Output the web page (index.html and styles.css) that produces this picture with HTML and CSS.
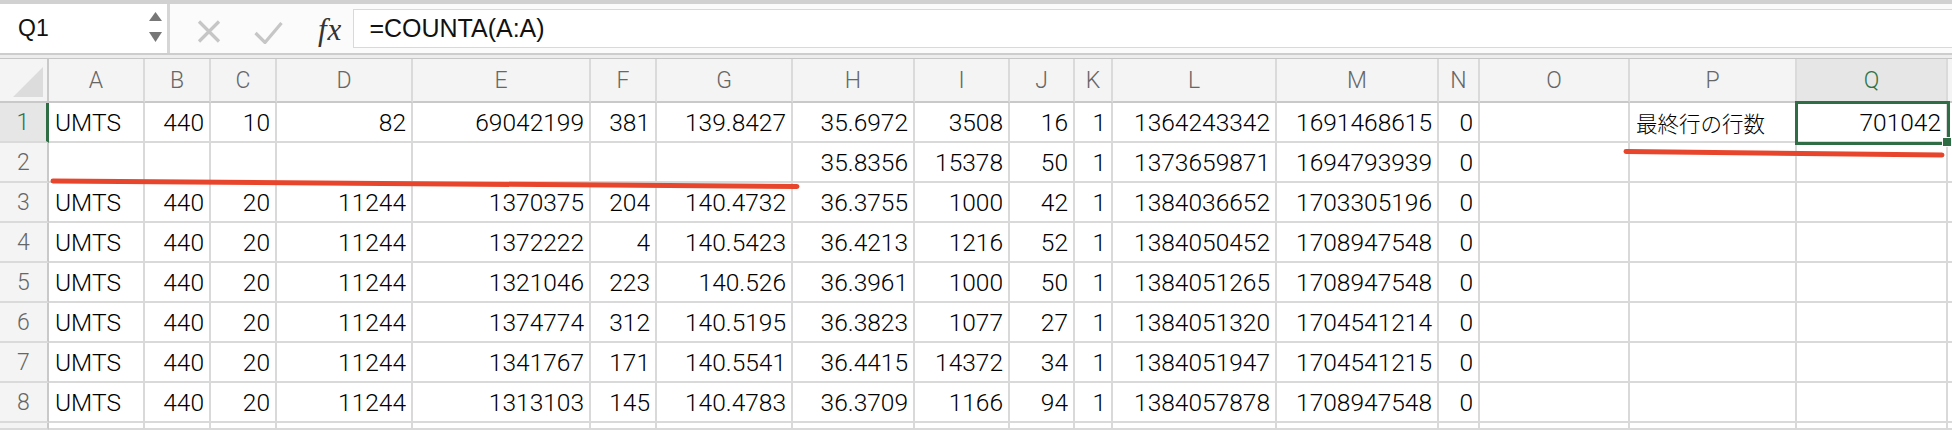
FILE: index.html
```html
<!DOCTYPE html>
<html lang="ja">
<head>
<meta charset="utf-8">
<title>Excel</title>
<link rel="stylesheet" href="styles.css">
</head>
<body>
<div class="app">
  <div class="topstrip"></div>
  <div class="toolbar">
    <div class="namebox">
      <span class="ref">Q1</span>
      <svg class="spin" width="14" height="32" viewBox="0 0 14 32">
        <polygon points="0,9 6.5,0 13,9" fill="#777"/>
        <polygon points="0,20 13,20 6.5,30" fill="#777"/>
      </svg>
    </div>
    <div class="actions">
      <svg class="icon-x" width="24" height="23" viewBox="0 0 24 23">
        <path d="M2 1.5 L22 21.5 M22 1.5 L2 21.5" stroke="#c6c6c6" stroke-width="3.2" fill="none"/>
      </svg>
      <svg class="icon-check" width="29" height="22" viewBox="0 0 29 22">
        <path d="M1.5 11 L11 20.5 L27.5 1" stroke="#c6c6c6" stroke-width="3.2" fill="none"/>
      </svg>
      <span class="fx">fx</span>
    </div>
    <div class="formula">=COUNTA(A:A)</div>
  </div>
  <div class="toolbar-sep"></div>

  <div class="sheet">
    <!-- header row -->
    <div class="corner"><div class="tri"></div></div>
    <div class="ch">A</div><div class="ch">B</div><div class="ch">C</div><div class="ch">D</div>
    <div class="ch">E</div><div class="ch">F</div><div class="ch">G</div><div class="ch">H</div>
    <div class="ch">I</div><div class="ch">J</div><div class="ch">K</div><div class="ch">L</div>
    <div class="ch">M</div><div class="ch">N</div><div class="ch">O</div><div class="ch">P</div>
    <div class="ch ch-sel">Q</div><div class="ch ch-end"></div>

    <!-- row 1 -->
    <div class="rh rh-sel">1</div>
    <div class="c">UMTS</div><div class="c n">440</div><div class="c n">10</div><div class="c n">82</div>
    <div class="c n">69042199</div><div class="c n">381</div><div class="c n">139.8427</div><div class="c n">35.6972</div>
    <div class="c n">3508</div><div class="c n">16</div><div class="c n">1</div><div class="c n">1364243342</div>
    <div class="c n">1691468615</div><div class="c n">0</div><div class="c"></div><div class="c jp">最終行の行数</div>
    <div class="c n sel">701042</div><div class="c end"></div>

    <!-- row 2 -->
    <div class="rh">2</div>
    <div class="c"></div><div class="c"></div><div class="c"></div><div class="c"></div>
    <div class="c"></div><div class="c"></div><div class="c"></div><div class="c n">35.8356</div>
    <div class="c n">15378</div><div class="c n">50</div><div class="c n">1</div><div class="c n">1373659871</div>
    <div class="c n">1694793939</div><div class="c n">0</div><div class="c"></div><div class="c"></div>
    <div class="c"></div><div class="c end"></div>

    <!-- row 3 -->
    <div class="rh">3</div>
    <div class="c">UMTS</div><div class="c n">440</div><div class="c n">20</div><div class="c n">11244</div>
    <div class="c n">1370375</div><div class="c n">204</div><div class="c n">140.4732</div><div class="c n">36.3755</div>
    <div class="c n">1000</div><div class="c n">42</div><div class="c n">1</div><div class="c n">1384036652</div>
    <div class="c n">1703305196</div><div class="c n">0</div><div class="c"></div><div class="c"></div>
    <div class="c"></div><div class="c end"></div>

    <!-- row 4 -->
    <div class="rh">4</div>
    <div class="c">UMTS</div><div class="c n">440</div><div class="c n">20</div><div class="c n">11244</div>
    <div class="c n">1372222</div><div class="c n">4</div><div class="c n">140.5423</div><div class="c n">36.4213</div>
    <div class="c n">1216</div><div class="c n">52</div><div class="c n">1</div><div class="c n">1384050452</div>
    <div class="c n">1708947548</div><div class="c n">0</div><div class="c"></div><div class="c"></div>
    <div class="c"></div><div class="c end"></div>

    <!-- row 5 -->
    <div class="rh">5</div>
    <div class="c">UMTS</div><div class="c n">440</div><div class="c n">20</div><div class="c n">11244</div>
    <div class="c n">1321046</div><div class="c n">223</div><div class="c n">140.526</div><div class="c n">36.3961</div>
    <div class="c n">1000</div><div class="c n">50</div><div class="c n">1</div><div class="c n">1384051265</div>
    <div class="c n">1708947548</div><div class="c n">0</div><div class="c"></div><div class="c"></div>
    <div class="c"></div><div class="c end"></div>

    <!-- row 6 -->
    <div class="rh">6</div>
    <div class="c">UMTS</div><div class="c n">440</div><div class="c n">20</div><div class="c n">11244</div>
    <div class="c n">1374774</div><div class="c n">312</div><div class="c n">140.5195</div><div class="c n">36.3823</div>
    <div class="c n">1077</div><div class="c n">27</div><div class="c n">1</div><div class="c n">1384051320</div>
    <div class="c n">1704541214</div><div class="c n">0</div><div class="c"></div><div class="c"></div>
    <div class="c"></div><div class="c end"></div>

    <!-- row 7 -->
    <div class="rh">7</div>
    <div class="c">UMTS</div><div class="c n">440</div><div class="c n">20</div><div class="c n">11244</div>
    <div class="c n">1341767</div><div class="c n">171</div><div class="c n">140.5541</div><div class="c n">36.4415</div>
    <div class="c n">14372</div><div class="c n">34</div><div class="c n">1</div><div class="c n">1384051947</div>
    <div class="c n">1704541215</div><div class="c n">0</div><div class="c"></div><div class="c"></div>
    <div class="c"></div><div class="c end"></div>

    <!-- row 8 -->
    <div class="rh">8</div>
    <div class="c">UMTS</div><div class="c n">440</div><div class="c n">20</div><div class="c n">11244</div>
    <div class="c n">1313103</div><div class="c n">145</div><div class="c n">140.4783</div><div class="c n">36.3709</div>
    <div class="c n">1166</div><div class="c n">94</div><div class="c n">1</div><div class="c n">1384057878</div>
    <div class="c n">1708947548</div><div class="c n">0</div><div class="c"></div><div class="c"></div>
    <div class="c"></div><div class="c end"></div>

    <!-- row 9 (partial) -->
    <div class="rh"></div>
    <div class="c"></div><div class="c"></div><div class="c"></div><div class="c"></div>
    <div class="c"></div><div class="c"></div><div class="c"></div><div class="c"></div>
    <div class="c"></div><div class="c"></div><div class="c"></div><div class="c"></div>
    <div class="c"></div><div class="c"></div><div class="c"></div><div class="c"></div>
    <div class="c"></div><div class="c end"></div>
  </div>

  <svg class="marks" width="1952" height="430" viewBox="0 0 1952 430">
    <path d="M53 181 L797 186.5" stroke="#e8462c" stroke-width="5" stroke-linecap="round" fill="none"/>
    <path d="M1626 151.5 L1942 155" stroke="#e8462c" stroke-width="5" stroke-linecap="round" fill="none"/>
  </svg>
</div>
</body>
</html>
```

FILE: styles.css
```css
html, body {
  margin: 0;
  padding: 0;
}

body {
  width: 1952px;
  height: 430px;
  overflow: hidden;
  background: #ffffff;
  font-family: "Noto Sans CJK JP", "Noto Sans", sans-serif;
}

.app {
  position: relative;
  width: 1952px;
  height: 430px;
  display: flex;
  flex-direction: column;
}

.topstrip {
  flex: none;
  height: 4px;
  background: #d1d1d1;
}

/* ---------- toolbar ---------- */
.toolbar {
  flex: none;
  height: 49px;
  display: flex;
  background: #fbfbfb;
}

.namebox {
  box-sizing: border-box;
  width: 170px;
  height: 49px;
  background: #ffffff;
  border-right: 3px solid #d6d6d6;
  display: flex;
  align-items: center;
  justify-content: space-between;
  padding: 0 4px 0 18px;
}

.ref {
  font-family: "Liberation Sans", Arial, sans-serif;
  font-size: 23px;
  color: #111;
  margin-top: -1px;
}

.spin {
  display: block;
  margin-top: -1px;
}

.actions {
  display: flex;
  align-items: center;
  padding-left: 27px;
}

.icon-x {
  display: block;
  margin-top: 6px;
}

.icon-check {
  display: block;
  margin-left: 33px;
  margin-top: 8px;
}

.fx {
  margin-left: 35px;
  font-family: "Liberation Serif", "DejaVu Serif", serif;
  font-style: italic;
  font-size: 31px;
  letter-spacing: 1px;
  color: #333;
  margin-top: 2px;
}

.formula {
  flex: 1;
  box-sizing: border-box;
  height: 39px;
  margin-top: 5px;
  margin-left: 11px;
  background: #ffffff;
  border: 1px solid #d9d9d9;
  border-right: none;
  display: flex;
  align-items: center;
  padding-left: 15px;
  font-family: "Liberation Sans", Arial, sans-serif;
  font-size: 25px;
  color: #111;
}

.toolbar-sep {
  flex: none;
  box-sizing: border-box;
  height: 6px;
  border-top: 2px solid #cdcdcd;
  border-bottom: 1px solid #c6c6c6;
  background: #ededed;
}

/* ---------- sheet ---------- */
.sheet {
  flex: 1;
  display: grid;
  grid-template-columns: 49px 96px 66px 66px 136px 178px 66px 136px 122px 95px 65px 38px 164px 162px 41px 150px 167px 151px 1fr;
  grid-template-rows: 44px repeat(8, 40px) 1fr;
  overflow: hidden;
}

.corner {
  position: relative;
  box-sizing: border-box;
  background: #f4f4f4;
  border-right: 2px solid #c9c9c9;
  border-bottom: 2px solid #c9c9c9;
}

.tri {
  position: absolute;
  right: 4px;
  bottom: 4px;
  width: 30px;
  height: 30px;
  background: #dcdcdc;
  clip-path: polygon(100% 0, 100% 100%, 0 100%);
}

.ch {
  box-sizing: border-box;
  background: #f4f4f4;
  border-right: 2px solid #dadada;
  border-bottom: 2px solid #c9c9c9;
  display: flex;
  align-items: center;
  justify-content: center;
  font-family: Roboto, "Noto Sans CJK JP", sans-serif;
  font-size: 23px;
  font-weight: 300;
  color: #666;
}

.ch-sel {
  background: #e6e6e6;
  color: #2f7446;
}

.ch-end {
  border-right: none;
}

.rh {
  box-sizing: border-box;
  background: #f4f4f4;
  border-right: 2px solid #c9c9c9;
  border-bottom: 2px solid #dadada;
  display: flex;
  align-items: center;
  justify-content: center;
  font-family: Roboto, "Noto Sans CJK JP", sans-serif;
  font-size: 23px;
  font-weight: 300;
  color: #666;
}

.rh-sel {
  background: #e6e6e6;
  color: #2f7446;
  border-right: 3px solid #2f6e45;
}

.c {
  box-sizing: border-box;
  border-right: 2px solid #d9d9d9;
  border-bottom: 2px solid #d9d9d9;
  display: flex;
  align-items: center;
  padding: 0 5px 0 6px;
  font-family: Roboto, "Noto Sans CJK JP", sans-serif;
  font-size: 24.5px;
  font-weight: 300;
  color: #000;
  white-space: nowrap;
  overflow: visible;
}

.jp {
  font-family: "Noto Sans CJK JP", sans-serif;
  font-size: 21.5px;
  font-weight: 300;
}

.n {
  justify-content: flex-end;
}

.end {
  border-right: none;
}

.sel {
  position: relative;
  outline: 3px solid #2f6e45;
  outline-offset: -1px;
  z-index: 2;
}

.sel::after {
  content: "";
  position: absolute;
  right: -6px;
  bottom: -6px;
  width: 8px;
  height: 8px;
  background: #2f6e45;
  border: 1px solid #ffffff;
}

/* ---------- hand-drawn annotation marks ---------- */
.marks {
  position: absolute;
  left: 0;
  top: 0;
  pointer-events: none;
  z-index: 5;
}
```
